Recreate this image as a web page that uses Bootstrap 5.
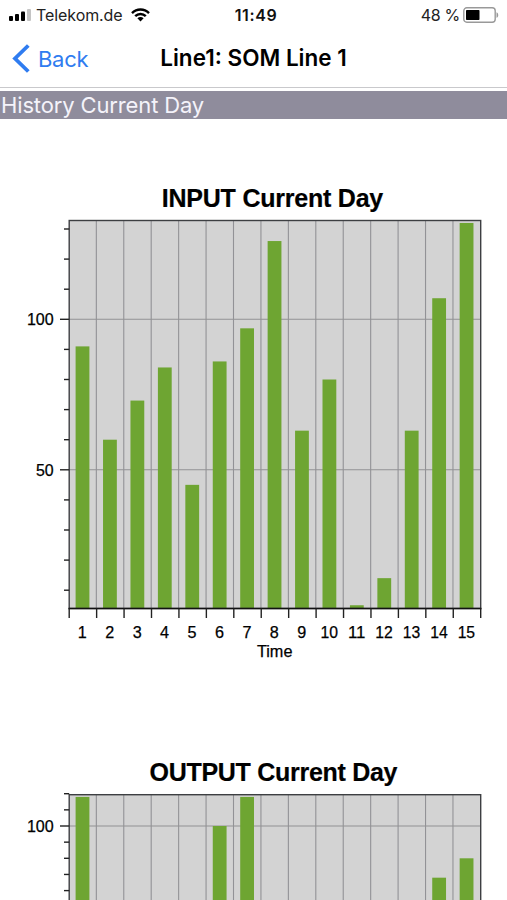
<!DOCTYPE html>
<html lang="en">
<head>
<meta charset="utf-8">
<meta name="viewport" content="width=device-width, initial-scale=1">
<title>Line1: SOM Line 1</title>
<link href="https://cdn.jsdelivr.net/npm/bootstrap@5.3.0/dist/css/bootstrap.min.css" rel="stylesheet">
<style>
  body { font-family: Inter, "Liberation Sans", sans-serif; color: #000; }
  .status-bar { height: 30px; font-size: 16px; line-height: 30px; color: #222; display: grid; grid-template-columns: 1fr auto 1fr; padding: 0 8px 0 9px; }
  .carrier { margin-left: 4px; letter-spacing: -.08px; }
  .clock { font-weight: 600; letter-spacing: .6px; color: #111; margin-left: 4px; }
  .charge { letter-spacing: -.3px; margin-right: 3px; }
  .nav-bar { height: 58px; border-bottom: 1.5px solid #c9c9cc; display: grid; grid-template-columns: 1fr auto 1fr; padding: 0 12px; line-height: 56px; }
  .back { color: #2f7cf0; font-size: 22px; letter-spacing: -.3px; }
  .nav-heading { font-size: 22.5px; font-weight: 600; letter-spacing: 0; margin: 0; line-height: 55px; }
  .section-heading { margin: 3px 0 0; height: 28px; line-height: 28px; padding-left: 1px; font-size: 22px; font-weight: 400; letter-spacing: -.14px; color: #f4f3fa; background: #8f8c9c; }
  .chart { display: block; font-family: "Liberation Sans", sans-serif; }
  .chart-title { font-size: 25px; font-weight: 700; stroke: #000; stroke-width: .2px; }
  .chart-label { font-size: 16.5px; stroke: #000; stroke-width: .25px; }
</style>
<script src="https://cdn.jsdelivr.net/npm/bootstrap@5.3.0/dist/js/bootstrap.bundle.min.js"></script>
</head>
<body class="bg-white">
<header>
  <div class="status-bar">
    <div class="d-flex align-items-center">
      <svg width="23" height="12" viewBox="0 0 23 12"><rect x="0" y="7" width="4" height="5" rx="1"/><rect x="6" y="5" width="4" height="7" rx="1"/><rect x="12" y="2.5" width="4" height="9.5" rx="1"/><rect x="18" y="0" width="4" height="12" rx="1" fill="#c4c4c4"/></svg>
      <span class="carrier">Telekom.de</span>
      <svg class="ms-2" width="19" height="14" viewBox="0 0 19 14" fill="none" stroke="#000" stroke-width="2.4"><path d="M1 5.1C5.8.2 13.2.2 18 5.1M4.2 8.2c3-3 7.6-3 10.6 0"/><path d="M9.5 13.4 6.4 10.3c1.8-1.7 4.4-1.7 6.2 0z" fill="#000" stroke="none"/></svg>
    </div>
    <span class="clock">11:49</span>
    <div class="d-flex align-items-center justify-content-end">
      <span class="charge">48 %</span>
      <svg width="36" height="16" viewBox="0 0 36 16"><rect x=".8" y=".8" width="31.4" height="14.4" rx="3" fill="#fff" stroke="#999" stroke-width="1.4"/><rect x="3" y="3" width="13.5" height="10" rx=".7"/><path d="M33.5 5.2c2.3.7 2.3 4.9 0 5.6z" fill="#999"/></svg>
    </div>
  </div>
  <nav class="nav-bar">
    <a class="back d-flex align-items-center text-decoration-none" href="#">
      <svg class="me-2" width="18" height="29" viewBox="0 0 18 29" fill="none" stroke="#2f7cf0" stroke-width="3.8"><path d="M16.3 1.5 3 14.5l13.3 13"/></svg>Back</a>
    <h1 class="nav-heading">Line1: SOM Line 1</h1>
    <span></span>
  </nav>
</header>
<main>
  <h2 class="section-heading">History Current Day</h2>
  <svg class="chart" id="input-chart" width="507" height="574" viewBox="0 0 507 574"></svg>
  <svg class="chart" id="output-chart" width="507" height="207" viewBox="0 0 507 207"></svg>
</main>
<script>
  function drawChart(id, o) {
    const left = 69.2, right = 480.7, bottom = o.bottom, step = (right - left) / 15;
    const y = v => o.y100 + (100 - v) * o.unit;
    const line = (x1, y1, x2, y2, c, w) => `<line x1="${x1}" y1="${y1}" x2="${x2}" y2="${y2}" stroke="${c}" stroke-width="${w}"/>`;
    const text = (x, yy, s, w, anchor, cls, adjust = 'spacingAndGlyphs') => `<text x="${x}" y="${yy}" text-anchor="${anchor}" textLength="${w}" lengthAdjust="${adjust}" class="${cls}">${s}</text>`;
    let s = text(o.titleX, o.titleY, o.title, o.titleW, 'middle', 'chart-title', 'spacing');
    s += `<rect x="${left}" y="${o.top}" width="${right - left}" height="${bottom - o.top}" fill="#d3d3d3"/>`;
    for (let i = 1; i < 15; i++) s += line(left + i * step - .3, o.top, left + i * step - .3, bottom, '#929296', 1.1);
    for (const v of o.labels) s += line(left, y(v), right, y(v), '#929294', 1.1);
    o.values.forEach((v, i) => { if (v) s += `<rect x="${left + i * step + 6.4}" y="${y(v)}" width="13.8" height="${bottom - y(v)}" fill="#6ea532"/>`; });
    s += `<rect x="${left}" y="${o.top}" width="${right - left}" height="${bottom - o.top}" fill="none" stroke="#3d3f42" stroke-width="1.4"/>`;
    for (let v = o.firstTick; y(v) > o.top - 2; v += o.tick) s += line(v % 50 ? 64 : 60, y(v), left, y(v), '#222', 1.4);
    for (const v of o.labels) s += text(53.7, y(v) + 6, v, v > 99 ? 26.8 : 17.7, 'end', 'chart-label');
    if (o.timeAxis) {
      s += line(left - .7, bottom, right + .7, bottom, '#111', 1.6);
      for (let i = 0; i <= 15; i++) s += line(left + i * step, bottom, left + i * step, bottom + 9.5, '#222', 1.4);
      for (let i = 1; i <= 15; i++) s += text(left + (i - .5) * step - .6, bottom + 29.7, i, i > 9 ? 17.5 : 9, 'middle', 'chart-label');
      s += text(274.7, bottom + 48.2, 'Time', 35.5, 'middle', 'chart-label');
    }
    document.getElementById(id).innerHTML = s;
  }
  drawChart('input-chart', { title: 'INPUT Current Day', titleX: 272.5, titleY: 88, titleW: 221.5, top: 101.5, bottom: 489.5, timeAxis: true, labels: [50, 100], y100: 200.3, unit: 3.01, firstTick: 10, tick: 10,
    values: [91, 60, 73, 84, 45, 86, 97, 126, 63, 80, 5, 14, 63, 107, 132] });
  drawChart('output-chart', { title: 'OUTPUT Current Day', titleX: 273.5, titleY: 88.3, titleW: 248, top: 101.7, bottom: 220, timeAxis: false, labels: [100], y100: 133, unit: 3.23, firstTick: 80, tick: 5,
    values: [109, 0, 0, 0, 0, 100, 109, 0, 0, 0, 0, 0, 0, 84, 90] });
</script>
</body>
</html>
